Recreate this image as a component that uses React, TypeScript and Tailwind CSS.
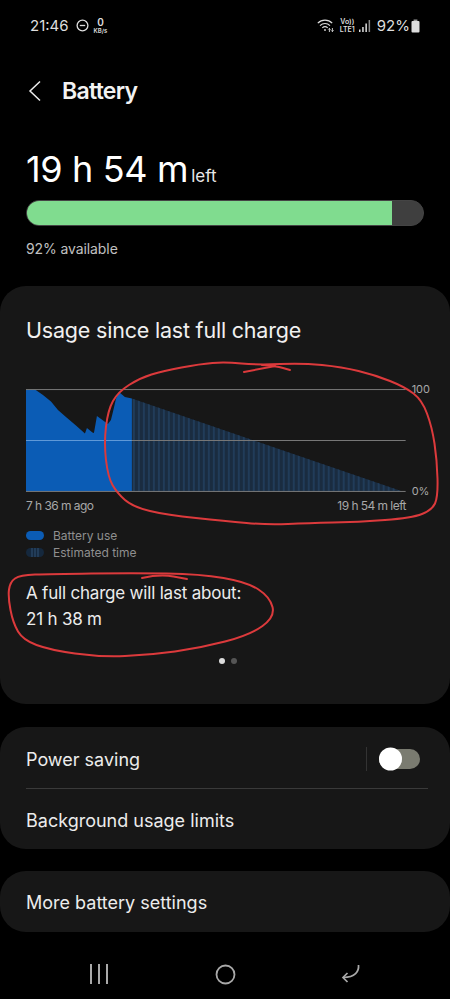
type Point = [number, number];

// smooth line through hand-traced points (midpoint quadratics)
const smooth = (pts: Point[], closed = false) => {
  const mid = (a: Point, b: Point): Point => [(a[0] + b[0]) / 2, (a[1] + b[1]) / 2];
  if (closed) {
    const start = mid(pts[pts.length - 1], pts[0]);
    let d = `M${start[0]} ${start[1]}`;
    pts.forEach((p, i) => {
      const m = mid(p, pts[(i + 1) % pts.length]);
      d += ` Q${p[0]} ${p[1]} ${m[0]} ${m[1]}`;
    });
    return d + " Z";
  }
  let d = `M${pts[0][0]} ${pts[0][1]}`;
  for (let i = 1; i < pts.length - 1; i++) {
    const m = mid(pts[i], pts[i + 1]);
    d += ` Q${pts[i][0]} ${pts[i][1]} ${m[0]} ${m[1]}`;
  }
  const last = pts[pts.length - 1];
  return d + ` L${last[0]} ${last[1]}`;
};

const chartLoop: Point[] = [
  [225, 362], [258, 365], [302, 363], [342, 367], [375, 375], [405, 387], [422, 400], [432, 427],
  [437, 460], [438, 497], [432, 510], [412, 518], [358, 522], [308, 523], [268, 525], [225, 521],
  [167, 515], [133, 507], [117, 493], [108, 477], [104, 443], [108, 410], [118, 392], [140, 378],
  [163, 371], [200, 364],
];

const chargeLoop: Point[] = [
  [20, 575], [10, 582], [8, 597], [13, 623], [23, 640], [50, 650], [100, 657], [150, 655],
  [200, 648], [250, 635], [275, 617], [270, 597], [247, 582], [200, 574], [133, 573], [50, 574],
];

const StatusBar = () => (
  <div className="flex h-[50px] shrink-0 items-center justify-between pl-[30px] pr-[30px] pt-[1px] text-[#dedede]">
    <div className="flex items-center">
      <span className="text-[15px] leading-none">21:46</span>
      <svg className="ml-[7px]" width="13" height="13" viewBox="0 0 13 13" fill="none" stroke="#dedede" strokeWidth="1.3">
        <circle cx="6.5" cy="6.5" r="5.4" />
        <path d="M3.8 6.5h5.4" />
      </svg>
      <div className="ml-[5px] flex flex-col items-center">
        <span className="text-[10px] font-semibold leading-[9px]">0</span>
        <span className="text-[6px] font-semibold leading-[7px]">KB/s</span>
      </div>
    </div>
    <div className="flex items-center">
      <svg width="17" height="15" viewBox="0 0 17 15" fill="none" stroke="#dedede" strokeWidth="1.2">
        <path d="M0.8 5.2c4-4 10.4-4 14.4 0" />
        <path d="M3 7.6c2.9-2.8 7.1-2.8 10 0" />
        <path d="M5.3 9.9c1.6-1.5 3.8-1.5 5.4 0" />
        <circle cx="8" cy="12" r="0.9" fill="#dedede" stroke="none" />
        <path d="M12.4 14V10.4M11.2 11.6l1.2-1.2 1.2 1.2" strokeWidth="0.9" />
        <path d="M15.4 10v3.6M14.2 12.4l1.2 1.2 1.2-1.2" strokeWidth="0.9" />
      </svg>
      <div className="ml-[6px] flex flex-col items-center">
        <span className="text-[7px] font-semibold leading-[8px]">Vo))</span>
        <span className="text-[7px] font-semibold leading-[8px]">LTE1</span>
      </div>
      <svg className="ml-[4px]" width="12" height="14" viewBox="0 0 12 14" fill="#dedede">
        <rect x="0" y="10.5" width="1.5" height="2.5" />
        <rect x="3.2" y="8" width="1.5" height="5" />
        <rect x="6.4" y="4.5" width="1.5" height="8.5" />
        <rect x="9.6" y="1" width="1.5" height="12" fill="#8a8a8a" />
      </svg>
      <span className="ml-[6px] text-[15px] leading-none">92%</span>
      <svg className="ml-[1px]" width="9" height="14" viewBox="0 0 9 14" fill="#dedede">
        <rect x="2.6" y="0.5" width="3.8" height="1.5" fill="#9a9a9a" />
        <rect x="0.5" y="2" width="8" height="11.5" rx="1" />
      </svg>
    </div>
  </div>
);

const UsageChart = () => {
  const stripes: number[] = [];
  for (let x = 107; x < 378; x += 5) stripes.push(x);

  return (
    <svg width="380" height="104" viewBox="0 0 380 104" className="block">
      <defs>
        <clipPath id="estimate">
          <polygon points="106,9.5 377,102.5 106,102.5" />
        </clipPath>
      </defs>
      <polygon points="106,9.5 377,102.5 106,102.5" fill="#1a2c40" />
      <g clipPath="url(#estimate)">
        {stripes.map((x) => (
          <rect key={x} x={x} y="0" width="2" height="104" fill="#213c59" />
        ))}
      </g>
      <path
        d="M0 0.5H9L17 6 25 12.5 32 21 40 28 50 36.5 59 44.5 61 39 66.5 43.5 68 44 71 27 82 35 85 31 87 23 90 10 93 3 99 8 106 9.5V102.5H0Z"
        fill="#0b5cb5"
      />
      <path d="M0 0.5H380" stroke="#777" strokeWidth="1" />
      <path d="M0 51.5H106" stroke="#5f9ad8" strokeWidth="1" />
      <path d="M106 51.5H380" stroke="#777" strokeWidth="1" />
      <path d="M0 102.5H380" stroke="#777" strokeWidth="1" />
    </svg>
  );
};

const UsageCard = () => (
  <section className="mt-[28px] h-[418px] shrink-0 rounded-[26px] bg-[#171717] pl-[26px] pr-[20px] pt-[30px]">
    <h2 className="text-[21.5px] leading-[28px] tracking-[-0.2px] text-[#f0f0f0]">Usage since last full charge</h2>
    <div className="mt-[45px] flex">
      <UsageChart />
      <div className="ml-[6px] flex h-[110px] flex-col justify-between text-[11px] leading-[12px] text-[#a8a8a8]">
        <span className="-mt-[6px]">100</span>
        <span className="mt-auto pb-[2px]">0%</span>
      </div>
    </div>
    <div className="-mt-[1px] flex w-[380px] justify-between text-[12px] leading-[16px] tracking-[-0.55px] text-[#a8a8a8]">
      <span>7 h 36 m ago</span>
      <span>19 h 54 m left</span>
    </div>
    <div className="mt-[13px] flex items-center text-[12px] leading-[17px] text-[#8f8f8f]">
      <span className="h-[9px] w-[18px] rounded-full bg-[#0b5cb5]" />
      <span className="ml-[9px]">Battery use</span>
    </div>
    <div className="flex items-center text-[12px] leading-[17px] text-[#8f8f8f]">
      <span className="flex h-[9px] w-[18px] items-center justify-center gap-[1.5px] rounded-full bg-[#15283d]">
        <span className="h-full w-[1.5px] bg-[#223c58]" />
        <span className="h-full w-[1.5px] bg-[#223c58]" />
        <span className="h-full w-[1.5px] bg-[#223c58]" />
      </span>
      <span className="ml-[9px]">Estimated time</span>
    </div>
    <p className="mt-[19px] text-[17px] leading-[26px] tracking-[-0.2px] text-[#ececec]">
      A full charge will last about:
      <br />
      21 h 38 m
    </p>
    <div className="mt-[26px] flex w-[404px] justify-center gap-[6px]">
      <span className="h-[6px] w-[6px] rounded-full bg-[#dcdcdc]" />
      <span className="h-[6px] w-[6px] rounded-full bg-[#555]" />
    </div>
  </section>
);

const SettingsCard = () => (
  <section className="mt-[23px] h-[122px] shrink-0 rounded-[26px] bg-[#171717] pl-[26px] pr-[22px]">
    <div className="flex h-[62px] items-center justify-between border-b border-[#3a3a3a] pt-[3px]">
      <span className="text-[18px] text-[#ececec]">Power saving</span>
      <div className="flex items-center pr-[8px]">
        <span className="h-[24px] w-px bg-[#333]" />
        <span className="relative ml-[12px] h-[20px] w-[41px] rounded-full bg-[#7a7b70]">
          <span className="absolute left-0 top-1/2 h-[23px] w-[23px] -translate-y-1/2 rounded-full bg-white" />
        </span>
      </div>
    </div>
    <div className="flex h-[60px] items-center pt-[3px]">
      <span className="text-[18px] text-[#ececec]">Background usage limits</span>
    </div>
  </section>
);

const NavBar = () => (
  <div className="mt-auto flex h-[50px] items-center justify-between px-[89px]">
    <svg width="20" height="20" viewBox="0 0 20 20" stroke="#a9a9a9" strokeWidth="2">
      <path d="M2 0v20M10 0v20M18 0v20" />
    </svg>
    <svg width="21" height="21" viewBox="0 0 21 21" fill="none" stroke="#a9a9a9" strokeWidth="1.8">
      <circle cx="10.500" cy="10.500" r="9" />
    </svg>
    <svg width="20" height="20" viewBox="0 0 20 20" fill="none" stroke="#a9a9a9" strokeWidth="1.7">
      <path d="M17.500 1c.7 6.500-3.500 12.500-15 12.500" />
      <path d="M6.500 9 2 13.500 6.500 18" />
    </svg>
  </div>
);

export default function App() {
  return (
    <div className="relative flex h-[999px] w-[450px] flex-col overflow-hidden bg-black font-['Inter',sans-serif]">
      <StatusBar />

      <header className="mt-[21px] flex h-[40px] shrink-0 items-center pl-[28px]">
        <svg width="13" height="22" viewBox="0 0 13 22" fill="none" stroke="#ececec" strokeWidth="1.5">
          <path d="M12 1.500 2 11l10 9.500" />
        </svg>
        <h1 className="ml-[21px] text-[23px] font-semibold tracking-[-0.7px] text-[#f2f2f2]">Battery</h1>
      </header>

      <div className="mt-[36px] shrink-0 px-[26px]">
        <div className="flex items-baseline text-white">
          <span className="text-[36px] leading-[44px] tracking-[-0.35px]">19 h 54 m</span>
          <span className="ml-[3px] text-[17px] text-[#e8e8e8]">left</span>
        </div>
        <div className="mt-[9px] flex h-[26px] w-[398px] overflow-hidden rounded-full border border-[#444] bg-[#3f3f3f]">
          <div className="h-full w-[365px] bg-[#80dc8f]" />
        </div>
        <p className="mt-[14px] text-[14px] leading-[18px] tracking-[-0.1px] text-[#c0c0c0]">92% available</p>
      </div>

      <UsageCard />
      <SettingsCard />

      <section className="mt-[22px] flex h-[61px] shrink-0 items-center rounded-[26px] bg-[#171717] px-[26px] pt-[2px]">
        <span className="text-[18px] text-[#ececec]">More battery settings</span>
      </section>

      <NavBar />

      {/* red pen scribbles on top of the screenshot */}
      <svg className="pointer-events-none absolute inset-0" width="450" height="999" fill="none" stroke="#dc3a3c" strokeWidth="2" strokeLinecap="round">
        <path d={smooth(chartLoop, true)} />
        <path d={smooth([[244, 372], [265, 368], [275, 366]])} />
        <path d={smooth([[262, 365], [276, 366], [290, 370]])} />
        <path d={smooth(chargeLoop, true)} />
        <path d={smooth([[142, 578], [160, 574], [187, 579]])} />
      </svg>
    </div>
  );
}
